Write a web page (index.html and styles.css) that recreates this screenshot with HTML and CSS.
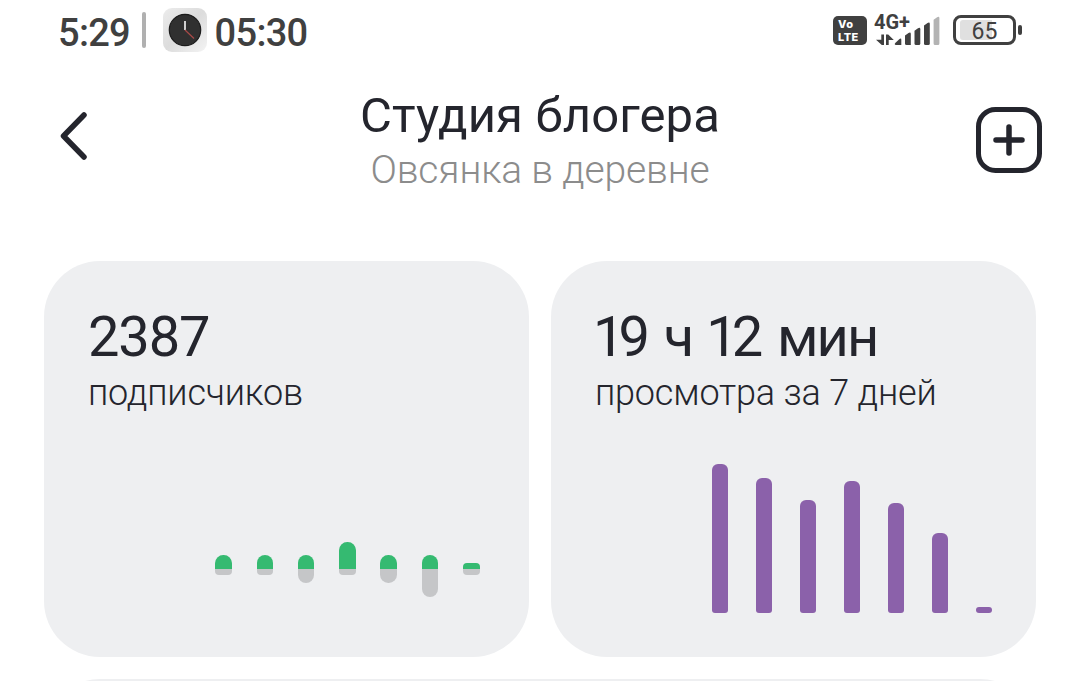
FILE: index.html
```html
<!DOCTYPE html>
<html lang="ru">
<head>
  <meta charset="UTF-8">
  <meta name="viewport" content="width=device-width, initial-scale=1.0">
  <title>Студия блогера</title>
  <link rel="stylesheet" href="styles.css">
</head>
<body>
  <div class="status-bar">
    <div class="status-left">
      <span class="time">5:29</span>
      <span class="divider"></span>
      <svg class="clock-icon" width="44" height="44" viewBox="0 0 44 44">
        <defs>
          <linearGradient id="clock-bg" x1="0" y1="0" x2="1" y2="1">
            <stop offset="0" stop-color="#ececec"/>
            <stop offset="0.5" stop-color="#dcdcdc"/>
            <stop offset="1" stop-color="#f4f4f4"/>
          </linearGradient>
        </defs>
        <rect width="44" height="44" rx="9" fill="url(#clock-bg)"/>
        <circle cx="22" cy="22" r="15.7" fill="#303030" stroke="#1b1b1b" stroke-width="1.2"/>
        <path d="M22 13v9" stroke="#d0d0d0" stroke-width="2"/>
        <path d="M22 22l9 8.5" stroke="#a84a48" stroke-width="1.2"/>
      </svg>
      <span class="time">05:30</span>
    </div>
    <div class="status-right">
      <div class="volte"><span>Vo</span><span>LTE</span></div>
      <div class="network">
        <span class="network-type">4G+</span>
        <svg class="signal" width="66" height="29" viewBox="0 0 66 29">
          <g fill="#404040">
            <path d="M7.3 18.5H10V29H7.8L2 23.7H7.3z"/>
            <path d="M12 18.5h2.2l5.6 5.5h-5.1V29H12z"/>
            <path d="M22 29q-2.200-.3-.5-2.200l4-3.800q1.800-1.200 1.800.800V29z"/>
            <path d="M31 19.5l3.500-2.500q2.300-1.300 2.300 1V29H32.500q-1.500 0-1.500-1.500z"/>
            <path d="M40.500 14.800l3.500-2.600q2.300-1.300 2.300 1V27.500q0 1.500-1.500 1.500H42q-1.500 0-1.500-1.500z"/>
            <path d="M50 9.600l3.500-2.600q2.300-1.300 2.300 1V27.500q0 1.500-1.500 1.500h-2.800q-1.500 0-1.500-1.500z"/>
          </g>
          <path d="M59.600 3.800l3.500-2.600q2.300-1.300 2.300 1V27.500q0 1.500-1.500 1.500h-2.800q-1.500 0-1.500-1.500z" fill="#b3b3b3"/>
        </svg>
      </div>
      <div class="battery">
        <div class="battery-body"><span class="battery-level">65</span></div>
        <span class="battery-tip"></span>
      </div>
    </div>
  </div>

  <header class="header">
    <button class="icon-btn back-btn" aria-label="Назад">
      <svg width="30" height="50" viewBox="0 0 30 50">
        <path d="M26 4L5.500 25L26 46" fill="none" stroke="#24252d" stroke-width="5.500" stroke-linecap="round" stroke-linejoin="round"/>
      </svg>
    </button>
    <div class="header-text">
      <h1>Студия блогера</h1>
      <p>Овсянка в деревне</p>
    </div>
    <button class="icon-btn add-btn" aria-label="Добавить">
      <svg width="66" height="66" viewBox="0 0 66 66" fill="none" stroke="#24252d" stroke-width="5">
        <rect x="2.500" y="2.500" width="61" height="61" rx="17"/>
        <path d="M33 20v26M20 33h26" stroke-width="5.500" stroke-linecap="round"/>
      </svg>
    </button>
  </header>

  <main class="cards">
    <section class="card">
      <h2 class="followers">2387</h2>
      <p>подписчиков</p>
      <div class="chart followers-chart">
        <div class="col"><span class="up" style="height: 14px"></span><span class="down small" style="height: 5.5px"></span></div>
        <div class="col"><span class="up" style="height: 14px"></span><span class="down small" style="height: 5.5px"></span></div>
        <div class="col"><span class="up" style="height: 14px"></span><span class="down" style="height: 14px"></span></div>
        <div class="col"><span class="up" style="height: 27.5px"></span><span class="down small" style="height: 5.5px"></span></div>
        <div class="col"><span class="up" style="height: 14px"></span><span class="down" style="height: 14px"></span></div>
        <div class="col"><span class="up" style="height: 14px"></span><span class="down" style="height: 27.5px"></span></div>
        <div class="col"><span class="up small" style="height: 6px"></span><span class="down small" style="height: 5.5px"></span></div>
      </div>
    </section>
    <section class="card">
      <h2><span class="one">1</span>9 ч <span class="one">1</span>2 <span class="unit">мин</span></h2>
      <p>просмотра за 7 дней</p>
      <div class="chart views-chart">
        <span class="bar" style="height: 149px"></span>
        <span class="bar" style="height: 135px"></span>
        <span class="bar" style="height: 113px"></span>
        <span class="bar" style="height: 132px"></span>
        <span class="bar" style="height: 110px"></span>
        <span class="bar" style="height: 80px"></span>
        <span class="bar empty" style="height: 6px"></span>
      </div>
    </section>
    <section class="card wide"></section>
  </main>
</body>
</html>
```
FILE: styles.css
```css
* {
  box-sizing: border-box;
}

body {
  margin: 0;
  height: 681px;
  overflow: hidden;
  background-color: #fff;
  color: #24252d;
  font-family: Roboto, "Liberation Sans", sans-serif;
}

h1, h2, p {
  margin: 0;
}

/* Status bar */
.status-bar {
  display: flex;
  justify-content: space-between;
  height: 60px;
  padding: 0 58px;
  color: #404040;
}

.status-left {
  display: flex;
  align-items: center;
}

.time {
  font-size: 38px;
  font-weight: 500;
  line-height: 44px;
  letter-spacing: -0.7px;
  padding-top: 5px;
}

.divider {
  width: 4px;
  height: 36px;
  margin: 0 17px 0 11.6px;
  border-radius: 2px;
  background-color: #b0b0b0;
}

.clock-icon {
  margin-right: 8px;
}

.status-right {
  display: flex;
  align-items: flex-start;
}

.volte {
  display: flex;
  flex-direction: column;
  width: 34px;
  height: 29px;
  margin-top: 16px;
  padding: 2px 0 0 5px;
  border-radius: 5px;
  background-color: #404040;
  color: #fff;
  font: 800 11px/13px Inter, sans-serif;
  letter-spacing: 0.4px;
}

.network {
  display: grid;
  width: 66px;
  margin: 12px 13px 0 7px;
}

.network > * {
  grid-area: 1 / 1;
}

.network-type {
  font-size: 20px;
  font-weight: 700;
  line-height: 20px;
}

.signal {
  margin-top: 4px;
}

.battery {
  display: flex;
  align-items: center;
  margin-top: 15px;
}

.battery-body {
  width: 63px;
  height: 30px;
  padding: 2px 4px;
  border: 3px solid #404040;
  border-radius: 8px;
}

.battery-level {
  display: block;
  height: 20px;
  border-radius: 3px;
  background: linear-gradient(to right, #e0e0e0 65%, transparent 65%);
  font-size: 23px;
  font-weight: 400;
  line-height: 23px;
  text-align: center;
}

.battery-tip {
  width: 4px;
  height: 10px;
  margin-left: 2px;
  border-radius: 2px;
  background-color: #404040;
}

/* Header */
.header {
  display: flex;
  justify-content: space-between;
  align-items: flex-start;
  height: 201px;
  padding: 27px 38px 0 58px;
}

.icon-btn {
  display: flex;
  padding: 0;
  border: none;
  background: none;
}

.back-btn {
  width: 46px;
  margin-top: 24px;
}

.add-btn {
  width: 66px;
  margin-top: 20px;
}

.header-text {
  text-align: center;
}

.header-text h1 {
  font-size: 49px;
  font-weight: 400;
  line-height: 58px;
  letter-spacing: 0.15px;
}

.header-text p {
  margin-top: 3px;
  color: #8c8c8c;
  font-size: 39px;
  font-weight: 300;
  line-height: 44px;
  letter-spacing: -0.15px;
}

/* Cards */
.cards {
  display: grid;
  grid-template-columns: 1fr 1fr;
  gap: 22px;
  height: 420px;
  padding: 0 44px;
  overflow: hidden;
}

.card {
  display: flex;
  flex-direction: column;
  height: 396px;
  padding: 43px 44px 44px;
  border-radius: 56px;
  background-color: #eeeff1;
}

.card.wide {
  grid-column: 1 / 3;
}

.card h2 {
  font-size: 56px;
  font-weight: 400;
  line-height: 66px;
}

.card .followers {
  letter-spacing: -1.1px;
}

.one {
  margin-left: -2px;
  letter-spacing: -6px;
}

.unit {
  letter-spacing: -2px;
}

.card p {
  margin-top: 2px;
  font-size: 36px;
  font-weight: 300;
  line-height: 42px;
  letter-spacing: -0.18px;
}

/* Charts */
.chart {
  display: flex;
  justify-content: flex-end;
  margin-top: auto;
}

.followers-chart {
  align-items: center;
  gap: 24.8px;
  height: 56px;
  margin-right: 5.5px;
  margin-bottom: 16px;
}

.col {
  display: grid;
  grid-template-rows: 28px 28px;
  width: 16.5px;
}

.up {
  align-self: end;
  border-radius: 8.25px 8.25px 0 0;
  background-color: #35ba71;
}

.down {
  border-radius: 0 0 8.25px 8.25px;
  background-color: #c5c6c8;
}

.up.small {
  border-radius: 4px 4px 0 0;
}

.down.small {
  border-radius: 0 0 4px 4px;
}

.views-chart {
  align-items: flex-end;
  gap: 27.5px;
}

.bar {
  width: 16.5px;
  border-radius: 6px 6px 3px 3px;
  background-color: #8b61aa;
}

.bar.empty {
  border-radius: 3px;
}
```
